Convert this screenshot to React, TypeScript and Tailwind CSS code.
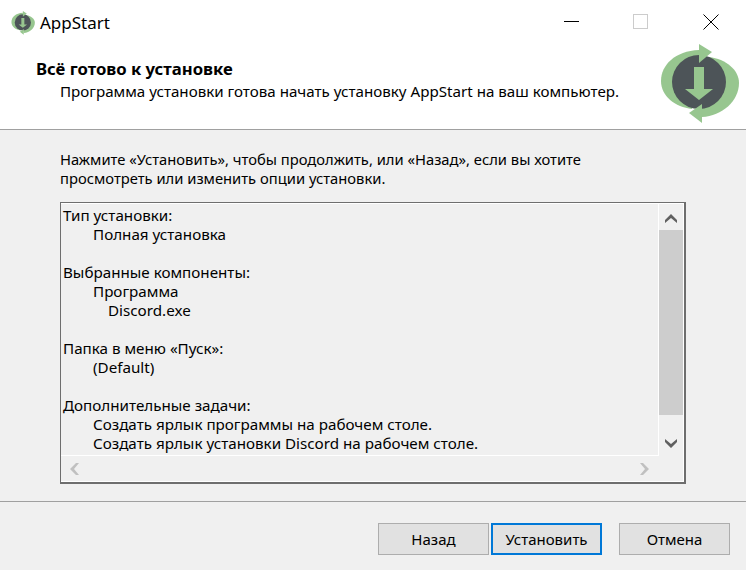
const FONT = "font-['Noto_Sans','Open_Sans',sans-serif]"

function AppLogo({ className }: { className: string }) {
  return (
    <svg viewBox="0 0 79 80" className={className}>
      <path d="M39 6 C15 7 1 21 1 37 C1 52 15 63 32 65 L39 38 Z" fill="#97c68f" />
      <path d="M49 13 C66 15 79 26 79 39 C79 57 62 72 42 73 L39 38 Z" fill="#97c68f" />
      <circle cx="39" cy="38" r="27" fill="#4d5458" />
      <path d="M39 0 L52 8 L39 19 Z" fill="#97c68f" />
      <path d="M42 79 L29 69 L42 60 Z" fill="#97c68f" />
      <path d="M34 23 H44 V45 H53 L39 56 L25 45 H34 Z" fill="#97c68f" />
    </svg>
  )
}

function WindowButtons() {
  return (
    <div className="flex items-center pr-[27px] pb-[3px]">
      <div className="h-px w-[15px] bg-black" />
      <div className="ml-[54px] h-[15px] w-[15px] border border-[#cccccc]" />
      <svg viewBox="0 0 16 16" className="ml-[55px] h-4 w-4">
        <path d="M0.5 0.5 L15.5 15.5 M15.5 0.5 L0.5 15.5" stroke="#000" strokeWidth="1" />
      </svg>
    </div>
  )
}

// scrollbar arrows are chunky filled chevrons, not line icons
function ScrollArrow({ dir, color }: { dir: "up" | "down" | "left" | "right"; color: string }) {
  if (dir === "up" || dir === "down") {
    return (
      <svg viewBox="0 0 12 9" className="h-[9px] w-[12px]">
        <path d={dir === "up" ? "M0 6 L6 0 L12 6 V9 L6 4 L0 9 Z" : "M0 0 L6 5 L12 0 V3 L6 9 L0 3 Z"} fill={color} />
      </svg>
    )
  }
  return (
    <svg viewBox="0 0 9 12" className="h-[12px] w-[9px]">
      <path d={dir === "left" ? "M6 0 L0 6 L6 12 H9 L4 6 L9 0 Z" : "M3 0 L9 6 L3 12 H0 L5 6 L0 0 Z"} fill={color} />
    </svg>
  )
}

function SummaryText() {
  return (
    <div className="h-[252px] w-[598px] overflow-hidden border-r border-b border-white pl-[2px] pt-[2px] text-[15.2px] leading-[19px] whitespace-nowrap text-black">
      <p>Тип установки:</p>
      <p className="pl-[30px]">Полная установка</p>
      <p>&nbsp;</p>
      <p>Выбранные компоненты:</p>
      <p className="pl-[30px]">Программа</p>
      <p className="pl-[45px]">Discord.exe</p>
      <p>&nbsp;</p>
      <p>Папка в меню «Пуск»:</p>
      <p className="pl-[30px]">(Default)</p>
      <p>&nbsp;</p>
      <p>Дополнительные задачи:</p>
      <p className="pl-[30px]">Создать ярлык программы на рабочем столе.</p>
      <p className="pl-[30px]">Создать ярлык установки Discord на рабочем столе.</p>
    </div>
  )
}

function WizardButton({ label, active }: { label: string; active?: boolean }) {
  return (
    <button
      className={`h-[32px] w-[111px] bg-[#e1e1e1] text-[15px] text-black ${
        active ? "border-2 border-[#0078d7]" : "border border-[#adadad]"
      }`}
    >
      {label}
    </button>
  )
}

export default function App() {
  return (
    <div className={`flex h-[570px] w-[746px] flex-col overflow-hidden bg-[#f0f0f0] ${FONT}`}>
      <div className="h-[130px] shrink-0 border-b border-[#a0a0a0] bg-white">
        <div className="flex h-[46px] items-center justify-between">
          <div className="flex items-center gap-[5px] pl-[11px]">
            <AppLogo className="h-[24px] w-[24px]" />
            <span className="text-[17px] text-black">AppStart</span>
          </div>
          <WindowButtons />
        </div>
        <div className="flex items-start justify-between pr-[7px]">
          <div className="pl-[36px] pt-[13px]">
            <h1 className="text-[16.7px] leading-[20px] font-bold text-black">Всё готово к установке</h1>
            <p className="pl-[24px] pt-[2px] text-[15.15px] leading-[20px] text-black">
              Программа установки готова начать установку AppStart на ваш компьютер.
            </p>
          </div>
          <AppLogo className="-mt-[2px] h-[80px] w-[79px] shrink-0" />
        </div>
      </div>

      <div className="px-[60px] pt-[20px] text-[14.75px] leading-[19px] text-black">
        <p>Нажмите «Установить», чтобы продолжить, или «Назад», если вы хотите</p>
        <p>просмотреть или изменить опции установки.</p>
      </div>

      <div className="mx-[60px] mt-[14px] h-[282px] w-[626px] border border-r-2 border-b-2 border-[#6e6e6e]">
        <div className="border-t border-r border-b border-white">
          <div className="flex">
            <SummaryText />
            <div className="flex h-[252px] w-[24px] flex-col items-center">
              <div className="flex h-[26px] items-center justify-center pt-[3px]">
                <ScrollArrow dir="up" color="#606060" />
              </div>
              <div className="h-[185px] w-full bg-[#cdcdcd]" />
              <div className="flex flex-1 items-end justify-center pb-[8px]">
                <ScrollArrow dir="down" color="#606060" />
              </div>
            </div>
          </div>
          <div className="flex h-[25px] w-[598px] items-center justify-between pl-[9px] pr-[10px]">
            <ScrollArrow dir="left" color="#c0c0c0" />
            <ScrollArrow dir="right" color="#c0c0c0" />
          </div>
        </div>
      </div>

      <div className="mt-[17px] border-t border-[#a0a0a0]" />

      <div className="flex pl-[378px] pt-[21px]">
        <WizardButton label="Назад" />
        <div className="ml-[2px]">
          <WizardButton label="Установить" active />
        </div>
        <div className="ml-[17px]">
          <WizardButton label="Отмена" />
        </div>
      </div>
    </div>
  )
}
